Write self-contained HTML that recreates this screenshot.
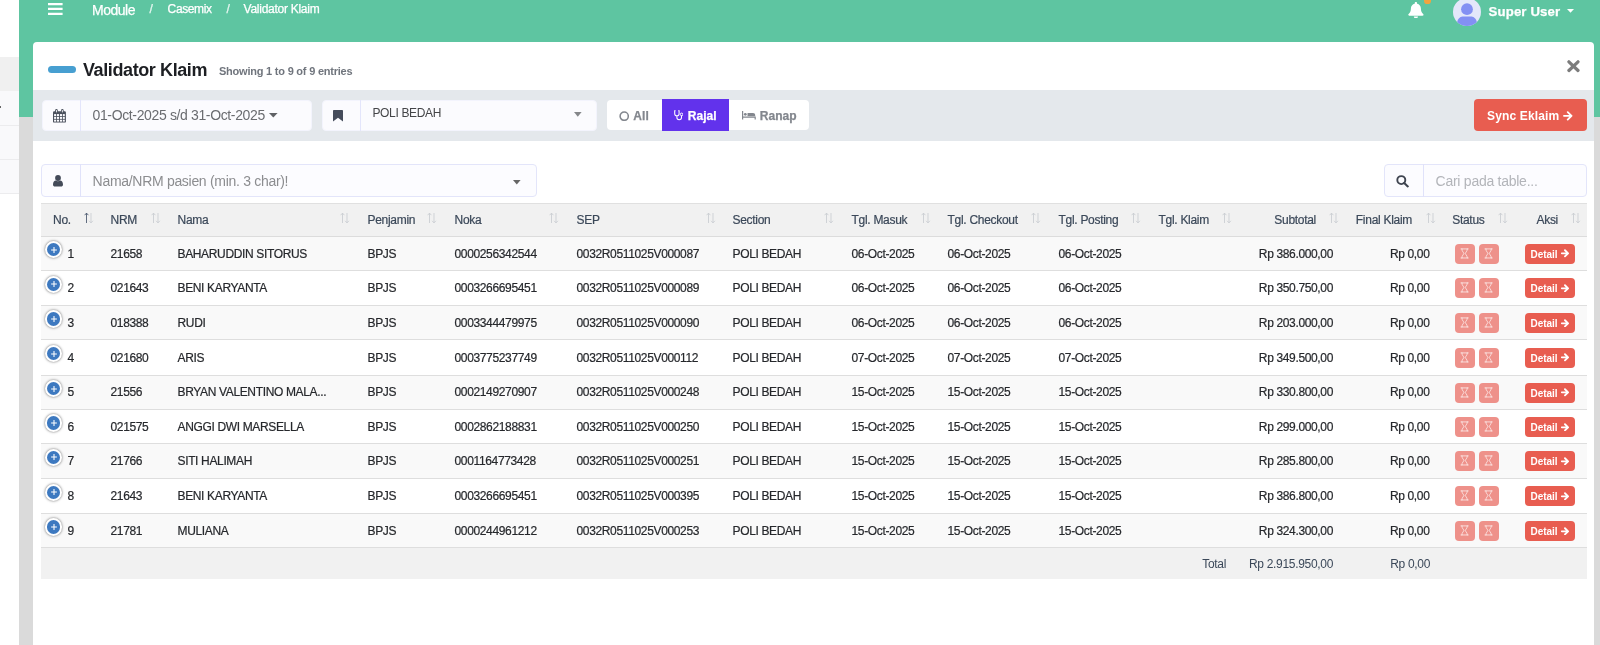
<!DOCTYPE html>
<html><head><meta charset="utf-8"><title>Validator Klaim</title>
<style>
*{box-sizing:border-box;margin:0;padding:0}
html,body{width:1600px;height:645px;overflow:hidden;background:#dadada;font-family:"Liberation Sans",sans-serif;}
body{position:relative}
.abs{position:absolute}
.side{position:absolute;left:0;top:0;width:19px;height:645px;background:#fff}
.side .g{position:absolute;left:0;width:19px}
.green{position:absolute;left:19px;top:0;width:1581px;height:117px;background:#5ec5a1}
.card{position:absolute;left:33px;top:42px;width:1561px;height:620px;background:#fff;border-radius:4px 4px 0 0}
.bar{position:absolute;left:33px;top:90px;width:1561px;height:51px;background:#e4e8ec}
.nav{position:absolute;color:#fff;white-space:nowrap;-webkit-text-stroke:0.25px #fff}
.title{position:absolute;left:83px;top:59.5px;font-size:18px;font-weight:bold;color:#1d1f23;letter-spacing:-0.4px;white-space:nowrap;line-height:20px}
.showing{position:absolute;left:219px;top:65px;font-size:11px;font-weight:bold;color:#70757d;letter-spacing:-0.22px;white-space:nowrap;line-height:13px}
.pill{position:absolute;left:47.5px;top:65.5px;width:28.8px;height:7.9px;border-radius:4px;background:#479fd1}
.ig{position:absolute;background:#fbfbfe;border-radius:4px}
.tbl{position:absolute;left:41px;top:203px;width:1546px;height:376px}
.thead{position:absolute;left:0;top:0;width:1546px;height:33.6px;background:#f1f1f1;border-top:1px solid #e0e0e0;border-bottom:1.6px solid #dcdcdc}
.th{position:absolute;top:8.8px;font-size:12px;line-height:14px;color:#3b4859;letter-spacing:-0.29px;-webkit-text-stroke:0.2px #3b4859;white-space:nowrap}
.srt{position:absolute;top:8.2px}
.row{position:absolute;left:0;width:1546px;border-bottom:1px solid #dedede;background:#fff}
.row.odd{background:#f9f9f9}
.td{position:absolute;top:10.2px;font-size:12px;line-height:14px;color:#26282c;letter-spacing:-0.35px;-webkit-text-stroke:0.2px #26282c;white-space:nowrap}
.plus{position:absolute;left:3.5px;top:4.4px;width:17.6px;height:17.6px;border-radius:50%;background:#3d79c0;border:2.1px solid #fff;box-shadow:0 0 2.5px #666;display:flex;align-items:center;justify-content:center}
.sb{position:absolute;top:7px;width:20px;height:20px;border-radius:4px;background:#ee918a;display:flex;align-items:center;justify-content:center}
.db{position:absolute;top:7px;width:50px;height:20px;border-radius:4px;background:#e85d50;color:#fff;font-size:10px;font-weight:bold;line-height:21.8px;padding-left:5.6px;white-space:nowrap;letter-spacing:-0.08px}
.db .arr{position:absolute;left:35.6px;top:5.7px}
.tfoot{position:absolute;left:0;width:1546px;height:31.2px;background:#f1f1f1}
.tf{position:absolute;top:9.5px;font-size:12px;line-height:14px;color:#3b4859;letter-spacing:-0.31px;white-space:nowrap}
.ig{border:1px solid #f3f4fd}
.ig2{position:absolute;background:#fcfcff;border:1px solid #e3e5fa;border-radius:4px}
.bt{top:108.5px;font-size:12px;line-height:14px;font-weight:bold;letter-spacing:0.05px;white-space:nowrap;-webkit-text-stroke:0.25px currentColor}
#wrap{position:absolute;left:0;top:0;width:1600px;height:645px;overflow:hidden;will-change:transform}

</style></head><body><div id="wrap">
<div class="side">
 <div class="g" style="top:57px;height:34px;background:#f0f0f0"></div>
 <div class="g" style="top:91px;height:103px;background:#f9f9fb"></div>
 <div class="g" style="top:125px;height:1px;background:#ececee"></div>
 <div class="g" style="top:159px;height:1px;background:#ececee"></div>
 <div class="g" style="top:193px;height:1px;background:#ececee"></div>
 <div class="g" style="top:106px;height:2px;width:1px;background:#666"></div>
</div>
<div class="green"></div>
<!-- navbar -->
<svg class="abs" style="left:48.3px;top:2.85px" width="15" height="13" viewBox="0 0 15 13"><path d="M0 1.1H14.6M0 5.9H14.6M0 10.9H14.6" stroke="#fff" stroke-width="2.3"/></svg>
<div class="nav" style="left:92px;top:2.4px;font-size:14px;line-height:16px;letter-spacing:-0.48px">Module</div>
<div class="nav" style="left:149.6px;top:2.3px;font-size:12px;line-height:14px;opacity:.85">/</div>
<div class="nav" style="left:167.6px;top:2.3px;font-size:12px;line-height:14px;letter-spacing:-0.38px">Casemix</div>
<div class="nav" style="left:226.4px;top:2.3px;font-size:12px;line-height:14px;opacity:.85">/</div>
<div class="nav" style="left:243.6px;top:2.3px;font-size:12px;line-height:14px;letter-spacing:-0.27px">Validator Klaim</div>
<!-- bell -->
<svg class="abs" style="left:1407.8px;top:1.9px" width="15.8" height="16.4" viewBox="0 0 15.8 16.4"><path d="M7.9 0C8.6 0 9.1 0.5 9.1 1.2V1.7C11.4 2.2 12.9 4.1 12.9 6.5C12.9 9.3 13.7 10.7 15.2 12C15.9 12.7 15.5 13.7 14.6 13.7H1.2C0.3 13.7 -0.1 12.7 0.6 12C2.1 10.7 2.9 9.3 2.9 6.5C2.9 4.1 4.4 2.2 6.7 1.7V1.2C6.7 0.5 7.2 0 7.9 0Z" fill="#fff"/><path d="M5.8 14.4H10C10 15.5 9.1 16.4 7.9 16.4C6.7 16.4 5.8 15.5 5.8 14.4Z" fill="#fff"/></svg>
<div class="abs" style="left:1424px;top:-3px;width:6.7px;height:6.7px;border-radius:50%;background:#f3a33f"></div>
<!-- avatar -->
<svg class="abs" style="left:1452.7px;top:-1.9px" width="28" height="28" viewBox="0 0 28 28"><defs><clipPath id="av"><circle cx="14" cy="14" r="14"/></clipPath></defs><circle cx="14" cy="14" r="14" fill="#e3e7fa"/><g clip-path="url(#av)"><circle cx="14" cy="11.2" r="5.9" fill="#8390f3"/><path d="M4 26C4 21.5 7 18.6 9.5 18.6H18.5C21 18.6 24 21.5 24 26V29H4Z" fill="#8390f3"/></g></svg>
<div class="nav" style="left:1488.6px;top:3.6px;font-size:13.2px;line-height:16px;font-weight:bold;letter-spacing:0.13px">Super User</div>
<svg class="abs" style="left:1567.2px;top:8.9px" width="7" height="4" viewBox="0 0 7 4"><path d="M0 0H7L3.5 3.8Z" fill="#fff"/></svg>

<div class="card"></div>
<div class="bar"></div>
<div class="pill"></div>
<div class="title">Validator Klaim</div>
<div class="showing">Showing 1 to 9 of 9 entries</div>
<svg class="abs" style="left:1566.5px;top:60.2px" width="13" height="12.4" viewBox="0 0 13 12.4"><path d="M1.9 1.8L11 10.5M11 1.8L1.9 10.5" stroke="#7c7c7c" stroke-width="3.2" stroke-linecap="round"/></svg>

<!-- filter bar: date -->
<div class="ig" style="left:41.8px;top:99.8px;width:270.6px;height:31.4px"></div>
<div class="abs" style="left:80px;top:100px;width:1px;height:31px;background:#e3e5fb"></div>
<svg class="abs" style="left:53px;top:109.2px" width="13" height="13.8" viewBox="0 0 13 13.8">
 <rect x="0" y="2.2" width="12.9" height="11.4" rx="1.2" fill="#4b515d"/>
 <g fill="#fcfcff">
  <rect x="1.1" y="5.1" width="2" height="1.9"/><rect x="3.9" y="5.1" width="2.2" height="1.9"/><rect x="7" y="5.1" width="2" height="1.9"/><rect x="9.8" y="5.1" width="2" height="1.9"/>
  <rect x="1.1" y="7.8" width="2" height="2.1"/><rect x="3.9" y="7.8" width="2.2" height="2.1"/><rect x="7" y="7.8" width="2" height="2.1"/><rect x="9.8" y="7.8" width="2" height="2.1"/>
  <rect x="1.1" y="10.7" width="2" height="1.9"/><rect x="3.9" y="10.7" width="2.2" height="1.9"/><rect x="7" y="10.7" width="2" height="1.9"/><rect x="9.8" y="10.7" width="2" height="1.9"/>
 </g>
 <rect x="2.2" y="0" width="2.5" height="4.3" rx="1.2" fill="#4b515d"/><rect x="8.1" y="0" width="2.5" height="4.3" rx="1.2" fill="#4b515d"/>
 <rect x="3" y="0.9" width="0.9" height="2.6" rx="0.4" fill="#fcfcff"/><rect x="8.9" y="0.9" width="0.9" height="2.6" rx="0.4" fill="#fcfcff"/>
</svg>
<div class="abs" style="left:92.5px;top:107px;font-size:14px;line-height:16px;color:#6a6c70;letter-spacing:-0.36px;white-space:nowrap">01-Oct-2025 s/d 31-Oct-2025</div>
<svg class="abs" style="left:268.5px;top:113.4px" width="9" height="5" viewBox="0 0 9 5"><path d="M0 0H8.6L4.3 4.4Z" fill="#5f6165"/></svg>

<!-- filter bar: section -->
<div class="ig" style="left:321.8px;top:99.8px;width:275.4px;height:31.4px"></div>
<div class="abs" style="left:360px;top:100px;width:1px;height:31px;background:#e3e5fb"></div>
<svg class="abs" style="left:333px;top:110.4px" width="10" height="11.8" viewBox="0 0 10 11.8"><path d="M0.8 0H9.2C9.7 0 10 0.3 10 0.8V11.6L5 7.8L0 11.6V0.8C0 0.3 0.3 0 0.8 0Z" fill="#454c5b"/></svg>
<div class="abs" style="left:372.4px;top:106px;font-size:12px;line-height:14px;color:#444548;letter-spacing:-0.33px;white-space:nowrap">POLI BEDAH</div>
<svg class="abs" style="left:574px;top:112px" width="8" height="5" viewBox="0 0 8 5"><path d="M0 0H7.6L3.8 4.8Z" fill="#85878a"/></svg>

<!-- button group -->
<div class="ig" style="left:607.1px;top:99.8px;width:202px;height:30.6px;background:#fff;border:none"></div>
<div class="abs" style="left:661.5px;top:98.8px;width:67.5px;height:32.2px;background:#6232ec"></div>
<svg class="abs" style="left:619px;top:110.5px" width="10.4" height="10.4" viewBox="0 0 10.4 10.4"><circle cx="5.2" cy="5.2" r="4.1" fill="none" stroke="#83878e" stroke-width="1.55"/></svg>
<div class="abs bt" style="left:633.3px;color:#83878e">All</div>
<svg class="abs" style="left:673.6px;top:110.4px" width="9.6" height="10.4" viewBox="0 0 9.6 10.4"><path d="M1.6 0.7H0.7V3.4C0.7 4.8 1.7 5.8 2.9 5.8C4.1 5.8 5.1 4.8 5.1 3.4V0.7H4.2M2.9 5.8V7.6C2.9 8.9 3.9 9.8 5.2 9.8C6.5 9.8 7.5 8.9 7.5 7.6V5.6" fill="none" stroke="#fff" stroke-width="1.05"/><circle cx="7.6" cy="4.4" r="1.3" fill="none" stroke="#fff" stroke-width="1"/></svg>
<div class="abs bt" style="left:687.7px;color:#fff">Rajal</div>
<svg class="abs" style="left:742.2px;top:111.4px" width="13.8" height="8.6" viewBox="0 0 13.8 8.6"><path d="M0.6 0V8.6M0.6 6.2H13.2V8.6" stroke="#83878e" stroke-width="1.2" fill="none"/><circle cx="3.3" cy="3.3" r="1.4" fill="#83878e"/><path d="M5.5 2H11C12.3 2 13.2 2.9 13.2 4V5.2H5.5Z" fill="#83878e"/></svg>
<div class="abs bt" style="left:759.7px;color:#83878e">Ranap</div>

<!-- sync -->
<div class="abs" style="left:1474.4px;top:99px;width:112.4px;height:32px;border-radius:4px;background:#e85d50"></div>
<div class="abs" style="left:1487.1px;top:108.5px;font-size:12px;line-height:14px;font-weight:bold;color:#fff;letter-spacing:0.14px;white-space:nowrap">Sync Eklaim</div>
<svg class="abs" style="left:1563.2px;top:111.2px" width="9.8" height="9.7" viewBox="0 0 10.2 10"><path d="M1 5H8.4M4.9 1.1L8.9 5L4.9 8.9" stroke="#fff" stroke-width="1.9" fill="none" stroke-linecap="round" stroke-linejoin="round"/></svg>

<!-- patient search -->
<div class="ig2" style="left:41px;top:164px;width:496px;height:33px"></div>
<div class="abs" style="left:80px;top:164px;width:1px;height:33px;background:#e0e2fa"></div>
<svg class="abs" style="left:53.2px;top:175px" width="10" height="11.6" viewBox="0 0 10 11.6"><circle cx="5" cy="3" r="2.9" fill="#444b59"/><path d="M0 9.4C0 7 1.4 5.6 2.8 5.6C3.4 6 4.1 6.3 5 6.3C5.9 6.3 6.6 6 7.2 5.6C8.6 5.6 10 7 10 9.4C10 10.8 9.2 11.5 8 11.5H2C0.8 11.5 0 10.8 0 9.4Z" fill="#444b59"/></svg>
<div class="abs" style="left:92.6px;top:172.8px;font-size:14px;line-height:16px;color:#8c8d90;letter-spacing:-0.3px;white-space:nowrap">Nama/NRM pasien (min. 3 char)!</div>
<svg class="abs" style="left:513px;top:179.5px" width="8" height="5" viewBox="0 0 8 5"><path d="M0 0H7.6L3.8 4.6Z" fill="#666"/></svg>

<!-- table search -->
<div class="ig2" style="left:1384px;top:164px;width:203px;height:33px"></div>
<div class="abs" style="left:1423px;top:164px;width:1px;height:33px;background:#e0e2fa"></div>
<svg class="abs" style="left:1396px;top:175.2px" width="13" height="12.4" viewBox="0 0 13 12.4"><circle cx="5.3" cy="5.1" r="4" fill="none" stroke="#3f4550" stroke-width="1.9"/><path d="M8.2 8L11.8 11.4" stroke="#3f4550" stroke-width="2.1" stroke-linecap="round"/></svg>
<div class="abs" style="left:1435.6px;top:172.6px;font-size:14px;line-height:16px;color:#b3b5ba;letter-spacing:-0.26px;white-space:nowrap">Cari pada table...</div>

<div class="tbl">
<div class="thead"><span class="th" style="left:12.0px">No.</span><svg class="srt" style="left:42.5px" width="10" height="12" viewBox="0 0 10 12"><path d="M2.5 11V1.2M0.6 3.2L2.5 1.1L4.4 3.2" stroke="#46546a" stroke-width="0.85" fill="none"/><path d="M7 1V10.8M5.1 8.8L7 10.9L8.9 8.8" stroke="#c9ccd1" stroke-width="0.85" fill="none"/></svg><span class="th" style="left:69.5px">NRM</span><svg class="srt" style="left:110.1px" width="10" height="12" viewBox="0 0 10 12"><path d="M2.5 11V1.2M0.6 3.2L2.5 1.1L4.4 3.2" stroke="#c9ccd1" stroke-width="0.85" fill="none"/><path d="M7 1V10.8M5.1 8.8L7 10.9L8.9 8.8" stroke="#c9ccd1" stroke-width="0.85" fill="none"/></svg><span class="th" style="left:136.5px">Nama</span><svg class="srt" style="left:298.9px" width="10" height="12" viewBox="0 0 10 12"><path d="M2.5 11V1.2M0.6 3.2L2.5 1.1L4.4 3.2" stroke="#c9ccd1" stroke-width="0.85" fill="none"/><path d="M7 1V10.8M5.1 8.8L7 10.9L8.9 8.8" stroke="#c9ccd1" stroke-width="0.85" fill="none"/></svg><span class="th" style="left:326.5px">Penjamin</span><svg class="srt" style="left:386.4px" width="10" height="12" viewBox="0 0 10 12"><path d="M2.5 11V1.2M0.6 3.2L2.5 1.1L4.4 3.2" stroke="#c9ccd1" stroke-width="0.85" fill="none"/><path d="M7 1V10.8M5.1 8.8L7 10.9L8.9 8.8" stroke="#c9ccd1" stroke-width="0.85" fill="none"/></svg><span class="th" style="left:413.5px">Noka</span><svg class="srt" style="left:507.65px" width="10" height="12" viewBox="0 0 10 12"><path d="M2.5 11V1.2M0.6 3.2L2.5 1.1L4.4 3.2" stroke="#c9ccd1" stroke-width="0.85" fill="none"/><path d="M7 1V10.8M5.1 8.8L7 10.9L8.9 8.8" stroke="#c9ccd1" stroke-width="0.85" fill="none"/></svg><span class="th" style="left:535.5px">SEP</span><svg class="srt" style="left:664.65px" width="10" height="12" viewBox="0 0 10 12"><path d="M2.5 11V1.2M0.6 3.2L2.5 1.1L4.4 3.2" stroke="#c9ccd1" stroke-width="0.85" fill="none"/><path d="M7 1V10.8M5.1 8.8L7 10.9L8.9 8.8" stroke="#c9ccd1" stroke-width="0.85" fill="none"/></svg><span class="th" style="left:691.5px">Section</span><svg class="srt" style="left:783.4px" width="10" height="12" viewBox="0 0 10 12"><path d="M2.5 11V1.2M0.6 3.2L2.5 1.1L4.4 3.2" stroke="#c9ccd1" stroke-width="0.85" fill="none"/><path d="M7 1V10.8M5.1 8.8L7 10.9L8.9 8.8" stroke="#c9ccd1" stroke-width="0.85" fill="none"/></svg><span class="th" style="left:810.5px">Tgl. Masuk</span><svg class="srt" style="left:879.65px" width="10" height="12" viewBox="0 0 10 12"><path d="M2.5 11V1.2M0.6 3.2L2.5 1.1L4.4 3.2" stroke="#c9ccd1" stroke-width="0.85" fill="none"/><path d="M7 1V10.8M5.1 8.8L7 10.9L8.9 8.8" stroke="#c9ccd1" stroke-width="0.85" fill="none"/></svg><span class="th" style="left:906.5px">Tgl. Checkout</span><svg class="srt" style="left:989.65px" width="10" height="12" viewBox="0 0 10 12"><path d="M2.5 11V1.2M0.6 3.2L2.5 1.1L4.4 3.2" stroke="#c9ccd1" stroke-width="0.85" fill="none"/><path d="M7 1V10.8M5.1 8.8L7 10.9L8.9 8.8" stroke="#c9ccd1" stroke-width="0.85" fill="none"/></svg><span class="th" style="left:1017.5px">Tgl. Posting</span><svg class="srt" style="left:1090.15px" width="10" height="12" viewBox="0 0 10 12"><path d="M2.5 11V1.2M0.6 3.2L2.5 1.1L4.4 3.2" stroke="#c9ccd1" stroke-width="0.85" fill="none"/><path d="M7 1V10.8M5.1 8.8L7 10.9L8.9 8.8" stroke="#c9ccd1" stroke-width="0.85" fill="none"/></svg><span class="th" style="left:1117.5px">Tgl. Klaim</span><svg class="srt" style="left:1180.9px" width="10" height="12" viewBox="0 0 10 12"><path d="M2.5 11V1.2M0.6 3.2L2.5 1.1L4.4 3.2" stroke="#c9ccd1" stroke-width="0.85" fill="none"/><path d="M7 1V10.8M5.1 8.8L7 10.9L8.9 8.8" stroke="#c9ccd1" stroke-width="0.85" fill="none"/></svg><span class="th" style="right:271px">Subtotal</span><svg class="srt" style="left:1288.4px" width="10" height="12" viewBox="0 0 10 12"><path d="M2.5 11V1.2M0.6 3.2L2.5 1.1L4.4 3.2" stroke="#c9ccd1" stroke-width="0.85" fill="none"/><path d="M7 1V10.8M5.1 8.8L7 10.9L8.9 8.8" stroke="#c9ccd1" stroke-width="0.85" fill="none"/></svg><span class="th" style="right:175px">Final Klaim</span><svg class="srt" style="left:1384.65px" width="10" height="12" viewBox="0 0 10 12"><path d="M2.5 11V1.2M0.6 3.2L2.5 1.1L4.4 3.2" stroke="#c9ccd1" stroke-width="0.85" fill="none"/><path d="M7 1V10.8M5.1 8.8L7 10.9L8.9 8.8" stroke="#c9ccd1" stroke-width="0.85" fill="none"/></svg><span class="th" style="right:102.5px">Status</span><svg class="srt" style="left:1457.15px" width="10" height="12" viewBox="0 0 10 12"><path d="M2.5 11V1.2M0.6 3.2L2.5 1.1L4.4 3.2" stroke="#c9ccd1" stroke-width="0.85" fill="none"/><path d="M7 1V10.8M5.1 8.8L7 10.9L8.9 8.8" stroke="#c9ccd1" stroke-width="0.85" fill="none"/></svg><span class="th" style="right:29px">Aksi</span><svg class="srt" style="left:1530.4px" width="10" height="12" viewBox="0 0 10 12"><path d="M2.5 11V1.2M0.6 3.2L2.5 1.1L4.4 3.2" stroke="#c9ccd1" stroke-width="0.85" fill="none"/><path d="M7 1V10.8M5.1 8.8L7 10.9L8.9 8.8" stroke="#c9ccd1" stroke-width="0.85" fill="none"/></svg></div><div class="row odd" style="top:33.50px;height:34.67px"><span class="plus"><svg width="8" height="8" viewBox="0 0 8 8" style="margin-left:0.9px"><path d="M4 1.1V6.9M1.1 4H6.9" stroke="#fff" stroke-width="1.05"/></svg></span><span class="td" style="left:26.5px">1</span><span class="td" style="left:69.5px">21658</span><span class="td" style="left:136.5px">BAHARUDDIN SITORUS</span><span class="td" style="left:326.5px">BPJS</span><span class="td" style="left:413.5px">0000256342544</span><span class="td" style="left:535.5px">0032R0511025V000087</span><span class="td" style="left:691.5px">POLI BEDAH</span><span class="td" style="left:810.5px">06-Oct-2025</span><span class="td" style="left:906.5px">06-Oct-2025</span><span class="td" style="left:1017.5px">06-Oct-2025</span><span class="td" style="right:254px">Rp 386.000,00</span><span class="td" style="right:157.5px">Rp 0,00</span><span class="sb" style="left:1414px"><svg width="9.2" height="10.9" viewBox="0 0 10 12" style="margin-top:-0.6px"><path d="M1 1H9M1 11H9M2 1C2 4 4.2 5 4.2 6C4.2 7 2 8 2 11M8 1C8 4 5.8 5 5.8 6C5.8 7 8 8 8 11" stroke="#fff" stroke-width="0.8" fill="none" stroke-linecap="round" opacity="0.92"/></svg></span><span class="sb" style="left:1438px"><svg width="9.2" height="10.9" viewBox="0 0 10 12" style="margin-top:-0.6px"><path d="M1 1H9M1 11H9M2 1C2 4 4.2 5 4.2 6C4.2 7 2 8 2 11M8 1C8 4 5.8 5 5.8 6C5.8 7 8 8 8 11" stroke="#fff" stroke-width="0.8" fill="none" stroke-linecap="round" opacity="0.92"/></svg></span><span class="db" style="left:1484px">Detail<svg class="arr" width="8.3" height="8.6" viewBox="0 0 9 9"><path d="M0.9 4.5H7.2M4.3 1.2L7.7 4.5L4.3 7.8" stroke="#fff" stroke-width="2" fill="none" stroke-linecap="round" stroke-linejoin="round"/></svg></span></div><div class="row" style="top:68.17px;height:34.66px"><span class="plus"><svg width="8" height="8" viewBox="0 0 8 8" style="margin-left:0.9px"><path d="M4 1.1V6.9M1.1 4H6.9" stroke="#fff" stroke-width="1.05"/></svg></span><span class="td" style="left:26.5px">2</span><span class="td" style="left:69.5px">021643</span><span class="td" style="left:136.5px">BENI KARYANTA</span><span class="td" style="left:326.5px">BPJS</span><span class="td" style="left:413.5px">0003266695451</span><span class="td" style="left:535.5px">0032R0511025V000089</span><span class="td" style="left:691.5px">POLI BEDAH</span><span class="td" style="left:810.5px">06-Oct-2025</span><span class="td" style="left:906.5px">06-Oct-2025</span><span class="td" style="left:1017.5px">06-Oct-2025</span><span class="td" style="right:254px">Rp 350.750,00</span><span class="td" style="right:157.5px">Rp 0,00</span><span class="sb" style="left:1414px"><svg width="9.2" height="10.9" viewBox="0 0 10 12" style="margin-top:-0.6px"><path d="M1 1H9M1 11H9M2 1C2 4 4.2 5 4.2 6C4.2 7 2 8 2 11M8 1C8 4 5.8 5 5.8 6C5.8 7 8 8 8 11" stroke="#fff" stroke-width="0.8" fill="none" stroke-linecap="round" opacity="0.92"/></svg></span><span class="sb" style="left:1438px"><svg width="9.2" height="10.9" viewBox="0 0 10 12" style="margin-top:-0.6px"><path d="M1 1H9M1 11H9M2 1C2 4 4.2 5 4.2 6C4.2 7 2 8 2 11M8 1C8 4 5.8 5 5.8 6C5.8 7 8 8 8 11" stroke="#fff" stroke-width="0.8" fill="none" stroke-linecap="round" opacity="0.92"/></svg></span><span class="db" style="left:1484px">Detail<svg class="arr" width="8.3" height="8.6" viewBox="0 0 9 9"><path d="M0.9 4.5H7.2M4.3 1.2L7.7 4.5L4.3 7.8" stroke="#fff" stroke-width="2" fill="none" stroke-linecap="round" stroke-linejoin="round"/></svg></span></div><div class="row odd" style="top:102.83px;height:34.67px"><span class="plus"><svg width="8" height="8" viewBox="0 0 8 8" style="margin-left:0.9px"><path d="M4 1.1V6.9M1.1 4H6.9" stroke="#fff" stroke-width="1.05"/></svg></span><span class="td" style="left:26.5px">3</span><span class="td" style="left:69.5px">018388</span><span class="td" style="left:136.5px">RUDI</span><span class="td" style="left:326.5px">BPJS</span><span class="td" style="left:413.5px">0003344479975</span><span class="td" style="left:535.5px">0032R0511025V000090</span><span class="td" style="left:691.5px">POLI BEDAH</span><span class="td" style="left:810.5px">06-Oct-2025</span><span class="td" style="left:906.5px">06-Oct-2025</span><span class="td" style="left:1017.5px">06-Oct-2025</span><span class="td" style="right:254px">Rp 203.000,00</span><span class="td" style="right:157.5px">Rp 0,00</span><span class="sb" style="left:1414px"><svg width="9.2" height="10.9" viewBox="0 0 10 12" style="margin-top:-0.6px"><path d="M1 1H9M1 11H9M2 1C2 4 4.2 5 4.2 6C4.2 7 2 8 2 11M8 1C8 4 5.8 5 5.8 6C5.8 7 8 8 8 11" stroke="#fff" stroke-width="0.8" fill="none" stroke-linecap="round" opacity="0.92"/></svg></span><span class="sb" style="left:1438px"><svg width="9.2" height="10.9" viewBox="0 0 10 12" style="margin-top:-0.6px"><path d="M1 1H9M1 11H9M2 1C2 4 4.2 5 4.2 6C4.2 7 2 8 2 11M8 1C8 4 5.8 5 5.8 6C5.8 7 8 8 8 11" stroke="#fff" stroke-width="0.8" fill="none" stroke-linecap="round" opacity="0.92"/></svg></span><span class="db" style="left:1484px">Detail<svg class="arr" width="8.3" height="8.6" viewBox="0 0 9 9"><path d="M0.9 4.5H7.2M4.3 1.2L7.7 4.5L4.3 7.8" stroke="#fff" stroke-width="2" fill="none" stroke-linecap="round" stroke-linejoin="round"/></svg></span></div><div class="row" style="top:137.50px;height:35.0px"><span class="plus"><svg width="8" height="8" viewBox="0 0 8 8" style="margin-left:0.9px"><path d="M4 1.1V6.9M1.1 4H6.9" stroke="#fff" stroke-width="1.05"/></svg></span><span class="td" style="left:26.5px">4</span><span class="td" style="left:69.5px">021680</span><span class="td" style="left:136.5px">ARIS</span><span class="td" style="left:326.5px">BPJS</span><span class="td" style="left:413.5px">0003775237749</span><span class="td" style="left:535.5px">0032R0511025V000112</span><span class="td" style="left:691.5px">POLI BEDAH</span><span class="td" style="left:810.5px">07-Oct-2025</span><span class="td" style="left:906.5px">07-Oct-2025</span><span class="td" style="left:1017.5px">07-Oct-2025</span><span class="td" style="right:254px">Rp 349.500,00</span><span class="td" style="right:157.5px">Rp 0,00</span><span class="sb" style="left:1414px"><svg width="9.2" height="10.9" viewBox="0 0 10 12" style="margin-top:-0.6px"><path d="M1 1H9M1 11H9M2 1C2 4 4.2 5 4.2 6C4.2 7 2 8 2 11M8 1C8 4 5.8 5 5.8 6C5.8 7 8 8 8 11" stroke="#fff" stroke-width="0.8" fill="none" stroke-linecap="round" opacity="0.92"/></svg></span><span class="sb" style="left:1438px"><svg width="9.2" height="10.9" viewBox="0 0 10 12" style="margin-top:-0.6px"><path d="M1 1H9M1 11H9M2 1C2 4 4.2 5 4.2 6C4.2 7 2 8 2 11M8 1C8 4 5.8 5 5.8 6C5.8 7 8 8 8 11" stroke="#fff" stroke-width="0.8" fill="none" stroke-linecap="round" opacity="0.92"/></svg></span><span class="db" style="left:1484px">Detail<svg class="arr" width="8.3" height="8.6" viewBox="0 0 9 9"><path d="M0.9 4.5H7.2M4.3 1.2L7.7 4.5L4.3 7.8" stroke="#fff" stroke-width="2" fill="none" stroke-linecap="round" stroke-linejoin="round"/></svg></span></div><div class="row odd" style="top:172.50px;height:34.33px"><span class="plus"><svg width="8" height="8" viewBox="0 0 8 8" style="margin-left:0.9px"><path d="M4 1.1V6.9M1.1 4H6.9" stroke="#fff" stroke-width="1.05"/></svg></span><span class="td" style="left:26.5px;top:9.3px">5</span><span class="td" style="left:69.5px;top:9.3px">21556</span><span class="td" style="left:136.5px;top:9.3px">BRYAN VALENTINO MALA...</span><span class="td" style="left:326.5px;top:9.3px">BPJS</span><span class="td" style="left:413.5px;top:9.3px">0002149270907</span><span class="td" style="left:535.5px;top:9.3px">0032R0511025V000248</span><span class="td" style="left:691.5px;top:9.3px">POLI BEDAH</span><span class="td" style="left:810.5px;top:9.3px">15-Oct-2025</span><span class="td" style="left:906.5px;top:9.3px">15-Oct-2025</span><span class="td" style="left:1017.5px;top:9.3px">15-Oct-2025</span><span class="td" style="right:254px;top:9.3px">Rp 330.800,00</span><span class="td" style="right:157.5px;top:9.3px">Rp 0,00</span><span class="sb" style="left:1414px"><svg width="9.2" height="10.9" viewBox="0 0 10 12" style="margin-top:-0.6px"><path d="M1 1H9M1 11H9M2 1C2 4 4.2 5 4.2 6C4.2 7 2 8 2 11M8 1C8 4 5.8 5 5.8 6C5.8 7 8 8 8 11" stroke="#fff" stroke-width="0.8" fill="none" stroke-linecap="round" opacity="0.92"/></svg></span><span class="sb" style="left:1438px"><svg width="9.2" height="10.9" viewBox="0 0 10 12" style="margin-top:-0.6px"><path d="M1 1H9M1 11H9M2 1C2 4 4.2 5 4.2 6C4.2 7 2 8 2 11M8 1C8 4 5.8 5 5.8 6C5.8 7 8 8 8 11" stroke="#fff" stroke-width="0.8" fill="none" stroke-linecap="round" opacity="0.92"/></svg></span><span class="db" style="left:1484px">Detail<svg class="arr" width="8.3" height="8.6" viewBox="0 0 9 9"><path d="M0.9 4.5H7.2M4.3 1.2L7.7 4.5L4.3 7.8" stroke="#fff" stroke-width="2" fill="none" stroke-linecap="round" stroke-linejoin="round"/></svg></span></div><div class="row" style="top:206.83px;height:34.34px"><span class="plus"><svg width="8" height="8" viewBox="0 0 8 8" style="margin-left:0.9px"><path d="M4 1.1V6.9M1.1 4H6.9" stroke="#fff" stroke-width="1.05"/></svg></span><span class="td" style="left:26.5px">6</span><span class="td" style="left:69.5px">021575</span><span class="td" style="left:136.5px">ANGGI DWI MARSELLA</span><span class="td" style="left:326.5px">BPJS</span><span class="td" style="left:413.5px">0002862188831</span><span class="td" style="left:535.5px">0032R0511025V000250</span><span class="td" style="left:691.5px">POLI BEDAH</span><span class="td" style="left:810.5px">15-Oct-2025</span><span class="td" style="left:906.5px">15-Oct-2025</span><span class="td" style="left:1017.5px">15-Oct-2025</span><span class="td" style="right:254px">Rp 299.000,00</span><span class="td" style="right:157.5px">Rp 0,00</span><span class="sb" style="left:1414px"><svg width="9.2" height="10.9" viewBox="0 0 10 12" style="margin-top:-0.6px"><path d="M1 1H9M1 11H9M2 1C2 4 4.2 5 4.2 6C4.2 7 2 8 2 11M8 1C8 4 5.8 5 5.8 6C5.8 7 8 8 8 11" stroke="#fff" stroke-width="0.8" fill="none" stroke-linecap="round" opacity="0.92"/></svg></span><span class="sb" style="left:1438px"><svg width="9.2" height="10.9" viewBox="0 0 10 12" style="margin-top:-0.6px"><path d="M1 1H9M1 11H9M2 1C2 4 4.2 5 4.2 6C4.2 7 2 8 2 11M8 1C8 4 5.8 5 5.8 6C5.8 7 8 8 8 11" stroke="#fff" stroke-width="0.8" fill="none" stroke-linecap="round" opacity="0.92"/></svg></span><span class="db" style="left:1484px">Detail<svg class="arr" width="8.3" height="8.6" viewBox="0 0 9 9"><path d="M0.9 4.5H7.2M4.3 1.2L7.7 4.5L4.3 7.8" stroke="#fff" stroke-width="2" fill="none" stroke-linecap="round" stroke-linejoin="round"/></svg></span></div><div class="row odd" style="top:241.17px;height:35.0px"><span class="plus"><svg width="8" height="8" viewBox="0 0 8 8" style="margin-left:0.9px"><path d="M4 1.1V6.9M1.1 4H6.9" stroke="#fff" stroke-width="1.05"/></svg></span><span class="td" style="left:26.5px">7</span><span class="td" style="left:69.5px">21766</span><span class="td" style="left:136.5px">SITI HALIMAH</span><span class="td" style="left:326.5px">BPJS</span><span class="td" style="left:413.5px">0001164773428</span><span class="td" style="left:535.5px">0032R0511025V000251</span><span class="td" style="left:691.5px">POLI BEDAH</span><span class="td" style="left:810.5px">15-Oct-2025</span><span class="td" style="left:906.5px">15-Oct-2025</span><span class="td" style="left:1017.5px">15-Oct-2025</span><span class="td" style="right:254px">Rp 285.800,00</span><span class="td" style="right:157.5px">Rp 0,00</span><span class="sb" style="left:1414px"><svg width="9.2" height="10.9" viewBox="0 0 10 12" style="margin-top:-0.6px"><path d="M1 1H9M1 11H9M2 1C2 4 4.2 5 4.2 6C4.2 7 2 8 2 11M8 1C8 4 5.8 5 5.8 6C5.8 7 8 8 8 11" stroke="#fff" stroke-width="0.8" fill="none" stroke-linecap="round" opacity="0.92"/></svg></span><span class="sb" style="left:1438px"><svg width="9.2" height="10.9" viewBox="0 0 10 12" style="margin-top:-0.6px"><path d="M1 1H9M1 11H9M2 1C2 4 4.2 5 4.2 6C4.2 7 2 8 2 11M8 1C8 4 5.8 5 5.8 6C5.8 7 8 8 8 11" stroke="#fff" stroke-width="0.8" fill="none" stroke-linecap="round" opacity="0.92"/></svg></span><span class="db" style="left:1484px">Detail<svg class="arr" width="8.3" height="8.6" viewBox="0 0 9 9"><path d="M0.9 4.5H7.2M4.3 1.2L7.7 4.5L4.3 7.8" stroke="#fff" stroke-width="2" fill="none" stroke-linecap="round" stroke-linejoin="round"/></svg></span></div><div class="row" style="top:276.17px;height:34.66px"><span class="plus"><svg width="8" height="8" viewBox="0 0 8 8" style="margin-left:0.9px"><path d="M4 1.1V6.9M1.1 4H6.9" stroke="#fff" stroke-width="1.05"/></svg></span><span class="td" style="left:26.5px">8</span><span class="td" style="left:69.5px">21643</span><span class="td" style="left:136.5px">BENI KARYANTA</span><span class="td" style="left:326.5px">BPJS</span><span class="td" style="left:413.5px">0003266695451</span><span class="td" style="left:535.5px">0032R0511025V000395</span><span class="td" style="left:691.5px">POLI BEDAH</span><span class="td" style="left:810.5px">15-Oct-2025</span><span class="td" style="left:906.5px">15-Oct-2025</span><span class="td" style="left:1017.5px">15-Oct-2025</span><span class="td" style="right:254px">Rp 386.800,00</span><span class="td" style="right:157.5px">Rp 0,00</span><span class="sb" style="left:1414px"><svg width="9.2" height="10.9" viewBox="0 0 10 12" style="margin-top:-0.6px"><path d="M1 1H9M1 11H9M2 1C2 4 4.2 5 4.2 6C4.2 7 2 8 2 11M8 1C8 4 5.8 5 5.8 6C5.8 7 8 8 8 11" stroke="#fff" stroke-width="0.8" fill="none" stroke-linecap="round" opacity="0.92"/></svg></span><span class="sb" style="left:1438px"><svg width="9.2" height="10.9" viewBox="0 0 10 12" style="margin-top:-0.6px"><path d="M1 1H9M1 11H9M2 1C2 4 4.2 5 4.2 6C4.2 7 2 8 2 11M8 1C8 4 5.8 5 5.8 6C5.8 7 8 8 8 11" stroke="#fff" stroke-width="0.8" fill="none" stroke-linecap="round" opacity="0.92"/></svg></span><span class="db" style="left:1484px">Detail<svg class="arr" width="8.3" height="8.6" viewBox="0 0 9 9"><path d="M0.9 4.5H7.2M4.3 1.2L7.7 4.5L4.3 7.8" stroke="#fff" stroke-width="2" fill="none" stroke-linecap="round" stroke-linejoin="round"/></svg></span></div><div class="row odd" style="top:310.83px;height:34.0px"><span class="plus"><svg width="8" height="8" viewBox="0 0 8 8" style="margin-left:0.9px"><path d="M4 1.1V6.9M1.1 4H6.9" stroke="#fff" stroke-width="1.05"/></svg></span><span class="td" style="left:26.5px">9</span><span class="td" style="left:69.5px">21781</span><span class="td" style="left:136.5px">MULIANA</span><span class="td" style="left:326.5px">BPJS</span><span class="td" style="left:413.5px">0000244961212</span><span class="td" style="left:535.5px">0032R0511025V000253</span><span class="td" style="left:691.5px">POLI BEDAH</span><span class="td" style="left:810.5px">15-Oct-2025</span><span class="td" style="left:906.5px">15-Oct-2025</span><span class="td" style="left:1017.5px">15-Oct-2025</span><span class="td" style="right:254px">Rp 324.300,00</span><span class="td" style="right:157.5px">Rp 0,00</span><span class="sb" style="left:1414px"><svg width="9.2" height="10.9" viewBox="0 0 10 12" style="margin-top:-0.6px"><path d="M1 1H9M1 11H9M2 1C2 4 4.2 5 4.2 6C4.2 7 2 8 2 11M8 1C8 4 5.8 5 5.8 6C5.8 7 8 8 8 11" stroke="#fff" stroke-width="0.8" fill="none" stroke-linecap="round" opacity="0.92"/></svg></span><span class="sb" style="left:1438px"><svg width="9.2" height="10.9" viewBox="0 0 10 12" style="margin-top:-0.6px"><path d="M1 1H9M1 11H9M2 1C2 4 4.2 5 4.2 6C4.2 7 2 8 2 11M8 1C8 4 5.8 5 5.8 6C5.8 7 8 8 8 11" stroke="#fff" stroke-width="0.8" fill="none" stroke-linecap="round" opacity="0.92"/></svg></span><span class="db" style="left:1484px">Detail<svg class="arr" width="8.3" height="8.6" viewBox="0 0 9 9"><path d="M0.9 4.5H7.2M4.3 1.2L7.7 4.5L4.3 7.8" stroke="#fff" stroke-width="2" fill="none" stroke-linecap="round" stroke-linejoin="round"/></svg></span></div><div class="tfoot" style="top:344.83px"><span class="tf" style="right:361px">Total</span><span class="tf" style="right:254px">Rp 2.915.950,00</span><span class="tf" style="right:157px">Rp 0,00</span></div>
</div>
</div></body></html>
